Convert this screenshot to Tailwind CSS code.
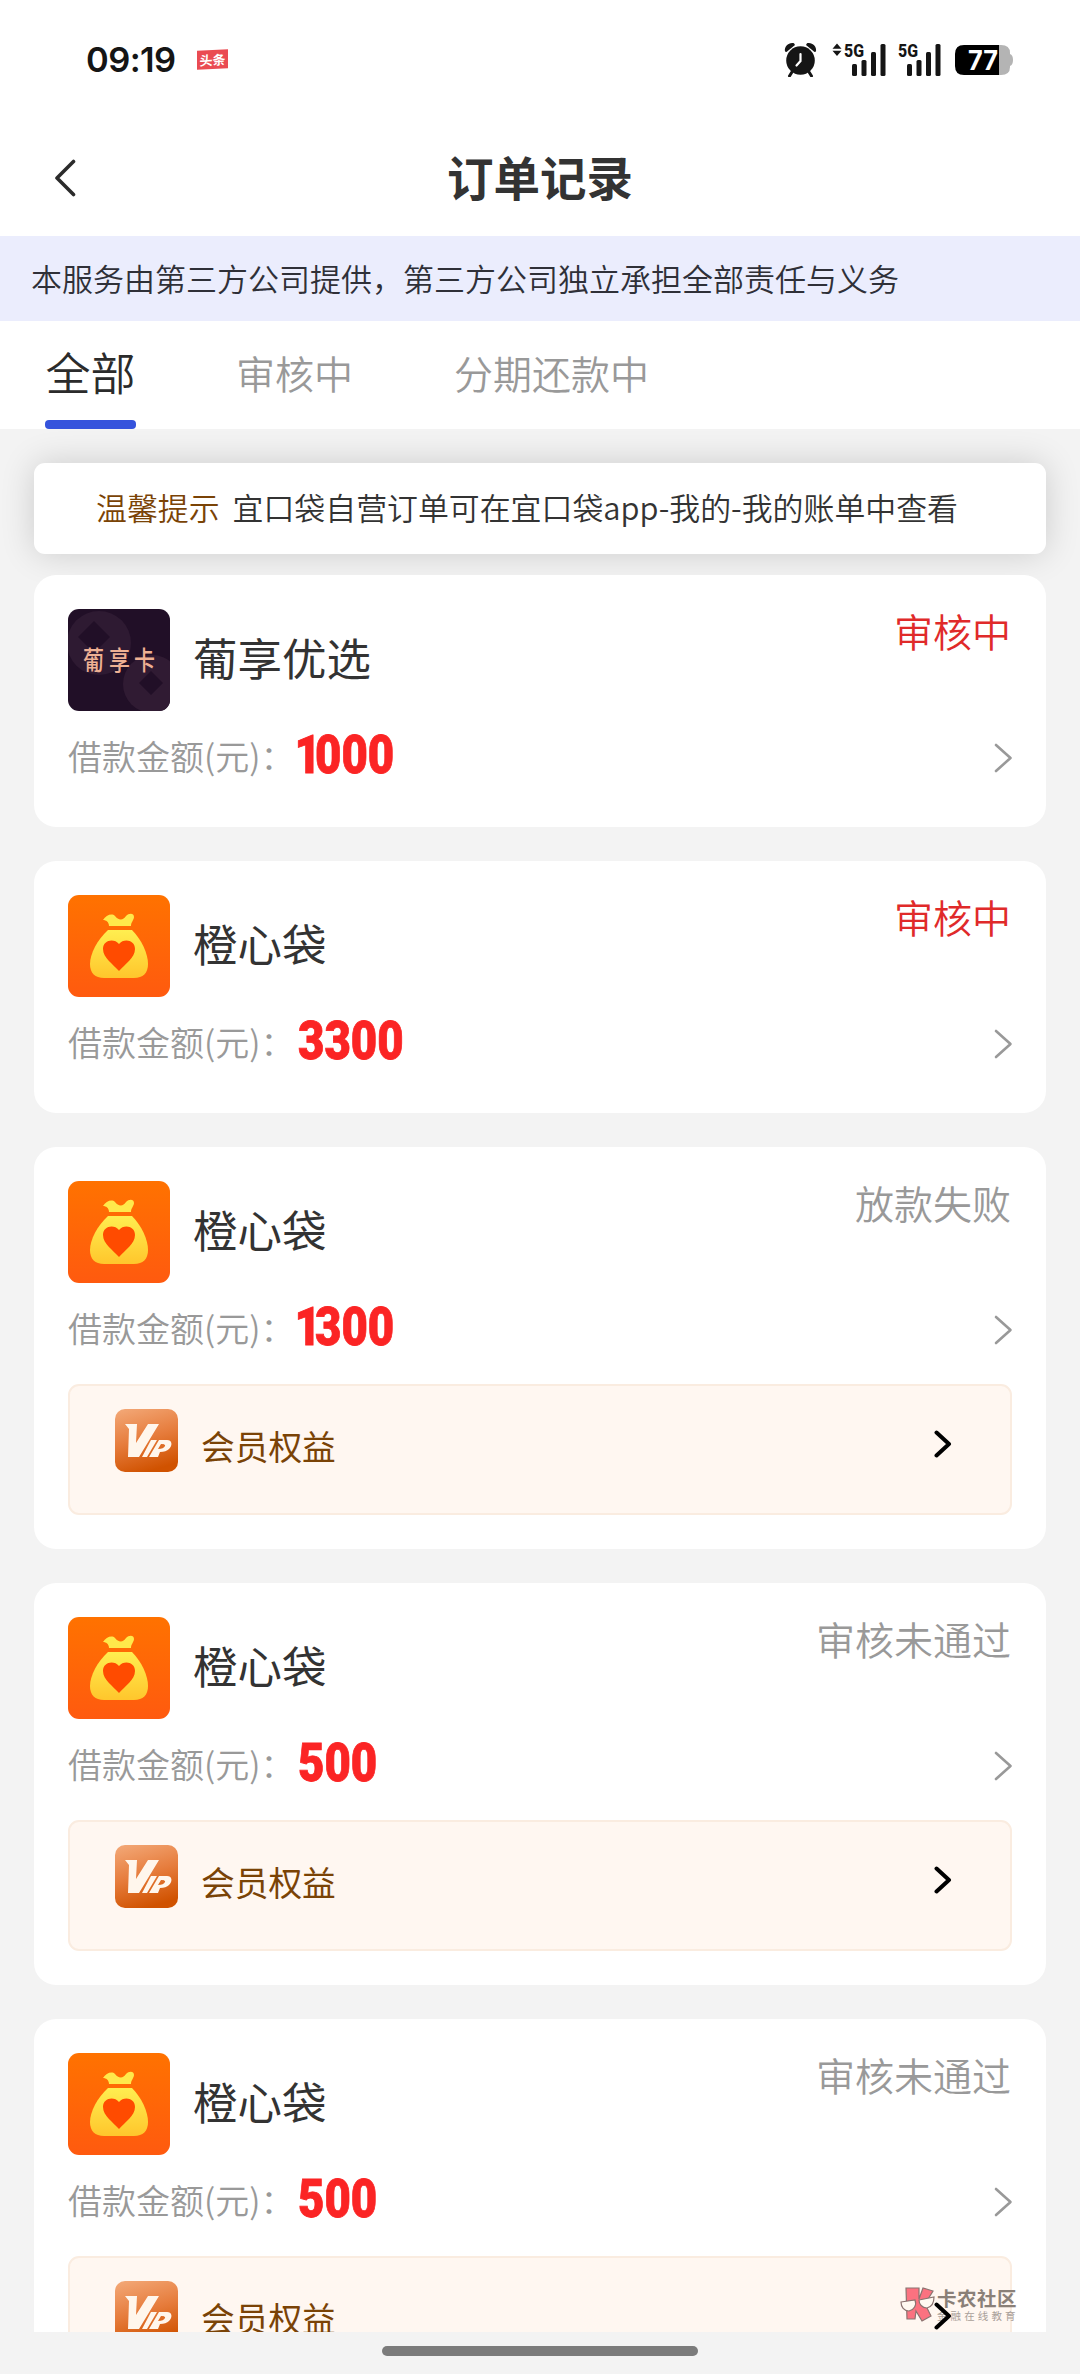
<!DOCTYPE html>
<html lang="zh-CN">
<head>
<meta charset="utf-8">
<title>订单记录</title>
<script src="https://cdn.jsdelivr.net/npm/@tailwindcss/browser@4"></script>
</head>
<body class="bg-[#f3f3f3]">
<svg class="absolute w-0 h-0">
  <defs>
    <linearGradient id="orange" x1="0" y1="0" x2="0" y2="1"><stop offset="0" stop-color="#ff7200"/><stop offset="1" stop-color="#ff5a0f"/></linearGradient>
    <linearGradient id="gold" x1="0" y1="0" x2="0" y2="1"><stop offset="0" stop-color="#ffee50"/><stop offset="1" stop-color="#ffc62c"/></linearGradient>
    <linearGradient id="copper" x1="0.2" y1="0" x2="0.5" y2="1"><stop offset="0" stop-color="#f2a573"/><stop offset="0.5" stop-color="#e67c3c"/><stop offset="1" stop-color="#d05200"/></linearGradient>
  </defs>
  <symbol id="bag" viewBox="0 0 102 102">
    <rect width="102" height="102" fill="url(#orange)"/>
    <path d="M35 25c3-5 9-7 12-4 3 4 8 5 11 0 3-3 8-3 8 1 0 3-3 5-3 9H41c0-4-3-6-6-6z" fill="#ffe94b"/>
    <path d="M40 35h24c10 10 16 24 16 34 0 9-5 14-14 14H36c-9 0-14-5-14-14 0-10 7-24 18-34z" fill="url(#gold)"/>
    <path d="M51 76C45 69 35 63 35 54c0-9 11-11 16-5 5-6 16-4 16 5 0 9-10 15-16 22z" fill="#ff4b00"/>
  </symbol>
  <symbol id="vip" viewBox="0 0 63 63">
    <rect width="63" height="63" fill="url(#copper)"/>
    <path d="M10 15h12l-1 19 12-19h11L24 48H13l1-28z" fill="#fff6ec"/>
    <path d="M36 31h6L32 48h-5zM44 31h8c5 0 6 5 2 9-2 2-5 3-9 3l-2 5h-9zM46 35l-3 5c4 0 6-1 7-3 .5-1-.5-2-4-2z" fill="#fff6ec" fill-rule="evenodd"/>
  </symbol>
  <symbol id="next" viewBox="0 0 19 30"><path d="M2 2l14.500 13L2 28" fill="none" stroke="currentColor" stroke-width="2.600" stroke-linecap="round" stroke-linejoin="round"/></symbol>
  <symbol id="nextbold" viewBox="0 0 18 28"><path d="M2.500 2.500L15 14 2.500 25.500" fill="none" stroke="#000" stroke-width="4" stroke-linecap="round" stroke-linejoin="round"/></symbol>
</svg>
<div class="relative w-[1080px] h-[2374px] overflow-hidden flex flex-col font-['Noto_Sans_CJK_SC',sans-serif] leading-none text-[#333]">
  <div class="h-20 bg-white shrink-0 flex items-center pl-[86px] pr-[67px] pt-[43px] pb-1 text-[#151515]">
    <span class="font-['Inter',sans-serif] font-semibold text-[34.500px] tracking-[-0.6px] w-[111px] pt-0.5">09:19</span>
    <span class="bg-[#ea4b52] text-white font-bold text-[13px] w-[31px] h-[19px] flex items-center justify-center -skew-y-3">头条</span>
    <span class="flex-1"></span>
    <svg class="w-[33px] h-[35px]" viewBox="0 0 33 35"><circle cx="16.500" cy="18.500" r="14.300" fill="#151515"/><path d="M1 9.500C0 4 5 0 10 1.200L11 3 2.500 10zM32 9.500C33 4 28 0 23 1.200L22 3l8.500 7z" fill="#151515"/><path d="M8 30l-2.500 4M25 30l2.500 4" stroke="#151515" stroke-width="3" stroke-linecap="round"/><path d="M16.500 12v7l-4 4.500" fill="none" stroke="#fff" stroke-width="2.200" stroke-linecap="round"/></svg>
    <svg class="w-[54px] h-[35px] ml-[15px]" viewBox="0 0 54 35"><path d="M0.500 6.800L5 1.500l4.500 5.300zM0.500 8.800h9L5 14z" fill="#151515"/><text x="12" y="15" font-family="Roboto" font-weight="800" font-size="18.500" textLength="20" lengthAdjust="spacingAndGlyphs" fill="#151515">5G</text><g fill="#151515"><rect x="20" y="22" width="5" height="12" rx="1.500"/><rect x="29.500" y="18" width="5" height="16" rx="1.500"/><rect x="39" y="10" width="5" height="24" rx="1.500"/><rect x="48.500" y="2" width="5" height="32" rx="1.500"/></g></svg>
    <svg class="w-[43px] h-[35px] ml-3" viewBox="11 0 43 35"><text x="11" y="15" font-family="Roboto" font-weight="800" font-size="18.500" textLength="20" lengthAdjust="spacingAndGlyphs" fill="#151515">5G</text><g fill="#151515"><rect x="20" y="22" width="5" height="12" rx="1.500"/><rect x="29.500" y="18" width="5" height="16" rx="1.500"/><rect x="39" y="10" width="5" height="24" rx="1.500"/><rect x="48.500" y="2" width="5" height="32" rx="1.500"/></g></svg>
    <svg class="w-[58px] h-[30px] ml-[14px]" viewBox="0 0 58 30"><path d="M40 0h6q9 0 9 8v1q3 1 3 6t-3 6v1q0 8-9 8h-6z" fill="#b4b4b4"/><path d="M44 0H9Q0 0 0 9v12q0 9 9 9h35z" fill="#000"/><text x="13" y="25" font-family="Inter" font-weight="700" font-size="27" textLength="30" lengthAdjust="spacingAndGlyphs" fill="#fff">77</text></svg>
  </div>
  <header class="h-[156px] bg-white shrink-0 flex items-center px-[54px] pt-[42px] pb-0.5">
    <svg class="w-[22px] h-[38px]" viewBox="0 0 22 38"><path d="M19.500 2.500L3 19l16.500 16.500" fill="none" stroke="#2b2b2b" stroke-width="3.600" stroke-linecap="round" stroke-linejoin="round"/></svg>
    <h1 class="flex-1 text-center font-bold text-[46.500px] pr-[22px] pb-[3px]">订单记录</h1>
  </header>
  <div class="h-[85px] bg-[#ebedfd] shrink-0 flex items-center pl-[31px] pb-[3px] text-[31px] font-[350] text-[#2f3038]">本服务由第三方公司提供，第三方公司独立承担全部责任与义务</div>
  <nav class="h-[108px] bg-white shrink-0 flex pl-[45px] text-[39px] font-[350] text-[#999]">
    <div class="w-[91px] flex flex-col items-center text-[45px] text-[#2b2b2b]"><span class="h-[99px] flex items-center pt-0.5">全部</span><span class="h-[9px] w-full rounded bg-[#3553dc]"></span></div>
    <div class="ml-[100px] h-[99px] flex items-center pt-1">审核中</div>
    <div class="ml-[101px] h-[99px] flex items-center pt-1">分期还款中</div>
  </nav>
  <main class="h-[1903px] overflow-hidden shrink-0 px-[34px] pt-[34px]">
    <div class="h-[91px] rounded-[11px] bg-white shadow-[0_0_34px_rgba(0,0,0,0.16)] flex items-center pl-[62px] pb-[3px] gap-[13px] text-[30.900px] font-[350]"><span class="text-[#7a4306]">温馨提示</span><span>宜口袋自营订单可在宜口袋app-我的-我的账单中查看</span></div>

    <div class="relative mt-[21px] flex flex-col gap-[34px]">
      <section class="h-[252px] rounded-[22px] bg-white px-[34px] pt-[34px]">
        <div class="flex h-[102px]">
          <svg class="size-[102px] rounded-[11px]" viewBox="0 0 102 102"><rect width="102" height="102" fill="#210f27"/><circle cx="31" cy="34" r="32" fill="#2e1a32"/><circle cx="84" cy="75" r="29" fill="#301b33"/><path d="M26 12l16 16-16 16-16-16zM83 62l12 12-12 12-12-12z" fill="#210f27"/><g font-family="Noto Sans CJK SC" font-weight="500" font-size="26" fill="#eeb093"><text x="15" y="61" textLength="21" lengthAdjust="spacingAndGlyphs">葡</text><text x="41" y="61" textLength="21" lengthAdjust="spacingAndGlyphs">享</text><text x="66" y="61" textLength="21" lengthAdjust="spacingAndGlyphs">卡</text></g></svg>
          <h2 class="ml-[23px] flex-1 flex items-center text-[44.500px] pb-1.5">葡享优选</h2>
          <span class="text-[39px] pt-0.5 pr-px font-[350] text-[#e02a2a]">审核中</span>
        </div>
        <div class="mt-[17px] h-[58px] flex items-center text-[34px] font-[350] text-[#999]"><span class="w-[230px] pb-0.5">借款金额(元)：</span><span class="flex-1 pb-[3px]"><b class="inline-block origin-left scale-x-86 font-['Roboto',sans-serif] font-black text-[53px] text-[#fb2424] [-webkit-text-stroke:0.8px_#fb2424]"><i class="not-italic -ml-1 tracking-[-7px]">1</i>000</b></span><svg class="w-[19px] h-[30px] -mr-px mt-0.5"><use href="#next"/></svg></div>
      </section>

      <section class="h-[252px] rounded-[22px] bg-white px-[34px] pt-[34px]">
        <div class="flex h-[102px]">
          <svg class="size-[102px] rounded-[11px]"><use href="#bag"/></svg>
          <h2 class="ml-[23px] flex-1 flex items-center text-[44.500px] pb-1.5">橙心袋</h2>
          <span class="text-[39px] pt-0.5 pr-px font-[350] text-[#e02a2a]">审核中</span>
        </div>
        <div class="mt-[17px] h-[58px] flex items-center text-[34px] font-[350] text-[#999]"><span class="w-[230px] pb-0.5">借款金额(元)：</span><span class="flex-1 pb-[3px]"><b class="inline-block origin-left scale-x-86 font-['Roboto',sans-serif] font-black text-[53px] text-[#fb2424] [-webkit-text-stroke:0.8px_#fb2424]">3300</b></span><svg class="w-[19px] h-[30px] -mr-px mt-0.5"><use href="#next"/></svg></div>
      </section>

      <section class="h-[402px] rounded-[22px] bg-white px-[34px] pt-[34px]">
        <div class="flex h-[102px]">
          <svg class="size-[102px] rounded-[11px]"><use href="#bag"/></svg>
          <h2 class="ml-[23px] flex-1 flex items-center text-[44.500px] pb-1.5">橙心袋</h2>
          <span class="text-[39px] pt-0.5 pr-px font-[350] text-[#999]">放款失败</span>
        </div>
        <div class="mt-[17px] h-[58px] flex items-center text-[34px] font-[350] text-[#999]"><span class="w-[230px] pb-0.5">借款金额(元)：</span><span class="flex-1 pb-[3px]"><b class="inline-block origin-left scale-x-86 font-['Roboto',sans-serif] font-black text-[53px] text-[#fb2424] [-webkit-text-stroke:0.8px_#fb2424]"><i class="not-italic -ml-1 tracking-[-7px]">1</i>300</b></span><svg class="w-[19px] h-[30px] -mr-px mt-0.5"><use href="#next"/></svg></div>
        <div class="mt-[26px] h-[131px] rounded-[11px] border-2 border-[#faece0] bg-[#fff7f1] flex items-start pl-[45px] pr-[58px] pt-[23px]">
          <svg class="size-[63px] rounded-[10px]"><use href="#vip"/></svg>
          <span class="flex-1 ml-[23px] mt-[20px] text-[33.700px] text-[#7a4306]">会员权益</span>
          <svg class="w-[18px] h-[28px] mt-[21px]"><use href="#nextbold"/></svg>
        </div>
      </section>

      <section class="h-[402px] rounded-[22px] bg-white px-[34px] pt-[34px]">
        <div class="flex h-[102px]">
          <svg class="size-[102px] rounded-[11px]"><use href="#bag"/></svg>
          <h2 class="ml-[23px] flex-1 flex items-center text-[44.500px] pb-1.5">橙心袋</h2>
          <span class="text-[39px] pt-0.5 pr-px font-[350] text-[#999]">审核未通过</span>
        </div>
        <div class="mt-[17px] h-[58px] flex items-center text-[34px] font-[350] text-[#999]"><span class="w-[230px] pb-0.5">借款金额(元)：</span><span class="flex-1 pb-[3px]"><b class="inline-block origin-left scale-x-86 font-['Roboto',sans-serif] font-black text-[53px] text-[#fb2424] [-webkit-text-stroke:0.8px_#fb2424]">500</b></span><svg class="w-[19px] h-[30px] -mr-px mt-0.5"><use href="#next"/></svg></div>
        <div class="mt-[26px] h-[131px] rounded-[11px] border-2 border-[#faece0] bg-[#fff7f1] flex items-start pl-[45px] pr-[58px] pt-[23px]">
          <svg class="size-[63px] rounded-[10px]"><use href="#vip"/></svg>
          <span class="flex-1 ml-[23px] mt-[20px] text-[33.700px] text-[#7a4306]">会员权益</span>
          <svg class="w-[18px] h-[28px] mt-[21px]"><use href="#nextbold"/></svg>
        </div>
      </section>

      <section class="h-[402px] rounded-[22px] bg-white px-[34px] pt-[34px]">
        <div class="flex h-[102px]">
          <svg class="size-[102px] rounded-[11px]"><use href="#bag"/></svg>
          <h2 class="ml-[23px] flex-1 flex items-center text-[44.500px] pb-1.5">橙心袋</h2>
          <span class="text-[39px] pt-0.5 pr-px font-[350] text-[#999]">审核未通过</span>
        </div>
        <div class="mt-[17px] h-[58px] flex items-center text-[34px] font-[350] text-[#999]"><span class="w-[230px] pb-0.5">借款金额(元)：</span><span class="flex-1 pb-[3px]"><b class="inline-block origin-left scale-x-86 font-['Roboto',sans-serif] font-black text-[53px] text-[#fb2424] [-webkit-text-stroke:0.8px_#fb2424]">500</b></span><svg class="w-[19px] h-[30px] -mr-px mt-0.5"><use href="#next"/></svg></div>
        <div class="mt-[26px] h-[131px] rounded-[11px] border-2 border-[#faece0] bg-[#fff7f1] flex items-start pl-[45px] pr-[58px] pt-[23px]">
          <svg class="size-[63px] rounded-[10px]"><use href="#vip"/></svg>
          <span class="flex-1 ml-[23px] mt-[20px] text-[33.700px] text-[#7a4306]">会员权益</span>
          <svg class="relative z-20 w-[18px] h-[28px] mt-[21px]"><use href="#nextbold"/></svg>
        </div>
      </section>
    </div>
  </main>
  <footer class="h-[42px] shrink-0 flex justify-center pt-[14px]"><span class="w-[316px] h-[10px] rounded-full bg-[#7b7b7b]"></span></footer>

  <div class="absolute left-[900px] top-[2286px] z-10 flex text-[#8a8078]">
    <svg class="w-[35px] h-[36px]" viewBox="0 0 35 36"><g stroke="#8a7370" stroke-width="1.200"><path d="M6 2h13v11l4-11 10 3-8 13 6 12-9 5-6-10-1 8H7z" fill="#fb7280"/><path d="M1 16l14-2c2 5-1 10-6 11-5 0-8-4-8-9zM19 14l15-3c0 6-3 10-7 11-5 0-8-4-8-8z" fill="#fff9f1"/></g></svg>
    <div class="w-[82px] ml-0.5 pt-0.5">
      <div class="text-[19.500px] font-bold tracking-[0.5px]">卡农社区</div>
      <div class="text-[10.500px] tracking-[3.100px] mt-[3px] whitespace-nowrap text-[#a9a099]">金融在线教育</div>
    </div>
  </div>
</div>
</body>
</html>
